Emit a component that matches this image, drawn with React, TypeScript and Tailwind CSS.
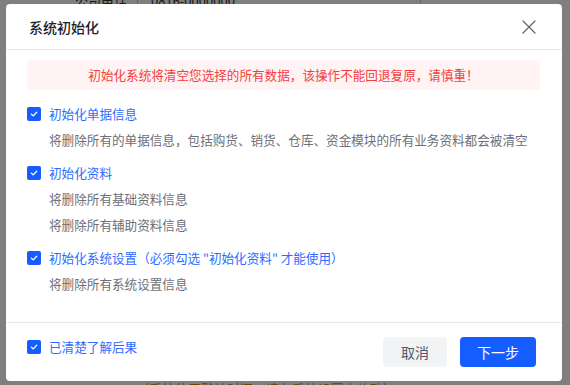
import React from "react";

const font = { fontFamily: '"Noto Sans CJK SC", "Noto Sans", sans-serif' };

function Check() {
  return (
    <span className="flex h-[14px] w-[14px] shrink-0 items-center justify-center rounded-[2px] bg-[#165dff]">
      <svg width="8" height="8" viewBox="0 0 8 8" fill="none">
        <path d="M1.3 4.1 L3.2 5.9 L6.7 2.2" stroke="#fff" strokeWidth="1.3" strokeLinecap="round" strokeLinejoin="round" />
      </svg>
    </span>
  );
}

function Option({ label, lines }: { label: string; lines: string[] }) {
  return (
    <div>
      <div className="flex h-[26px] items-center gap-[8px]">
        <Check />
        <span className="text-[12.6px] text-[#2f6bff]">{label}</span>
      </div>
      {lines.map((l) => (
        <div key={l} className="flex h-[26px] items-center pl-[22px] text-[12.6px] text-[#6b7079]">
          {l}
        </div>
      ))}
    </div>
  );
}

export default function App() {
  return (
    <div className="relative h-[385px] w-[570px] overflow-hidden bg-white" style={font}>
      {/* page behind the mask */}
      <div className="absolute left-[75px] top-[-9px] flex items-center text-[13px] text-[#333]">
        <span className="w-[62px]">公司电话</span>
        <span className="h-[20px] w-px bg-[#ccc]" />
        <span className="ml-[13px] w-[269px]">0816-0000000</span>
        <span className="h-[20px] w-px bg-[#ccc]" />
      </div>
      <div className="absolute left-[136px] top-[379px] text-[13px] text-[#d48806]">
        （系统使用默认时间，请在系统设置中修改）
      </div>

      <div className="absolute inset-0 bg-black/50 pl-[6px] pt-[4px]">
        <div className="flex h-[377px] w-[556px] flex-col rounded-[4px] bg-white">
          <div className="flex h-[46px] items-center justify-between border-b border-[#e8e9ee] pl-[23px] pr-[26px]">
            <span className="pt-[2px] text-[14px] font-medium text-[#1d2129]">系统初始化</span>
            <svg width="14" height="14" viewBox="0 0 14 14" fill="none">
              <path d="M1 1 L13 13 M13 1 L1 13" stroke="#5c6370" strokeWidth="1.2" strokeLinecap="round" />
            </svg>
          </div>

          <div className="flex flex-1 flex-col px-[21px] pt-[10px]">
            <div className="flex h-[30px] w-[513px] items-center justify-center rounded-[4px] bg-[#fff3f3] text-[12.6px] text-[#f53f3f]">
              初始化系统将清空您选择的所有数据，该操作不能回退复原，请慎重！
            </div>
            <div className="mt-[11px] flex flex-col gap-[7px]">
              <Option
                label="初始化单据信息"
                lines={["将删除所有的单据信息，包括购货、销货、仓库、资金模块的所有业务资料都会被清空"]}
              />
              <Option label="初始化资料" lines={["将删除所有基础资料信息", "将删除所有辅助资料信息"]} />
              <Option
                label={'初始化系统设置（必须勾选 "初始化资料" 才能使用）'}
                lines={["将删除所有系统设置信息"]}
              />
            </div>
          </div>

          <div className="flex h-[59px] items-start justify-between border-t border-[#e8e9ee] pl-[21px] pr-[26px]">
            <div className="mt-[11px] flex h-[26px] items-center gap-[8px]">
              <Check />
              <span className="text-[12.6px] text-[#2f6bff]">已清楚了解后果</span>
            </div>
            <div className="mt-[14px] flex gap-[13px]">
              <button className="h-[30px] w-[64px] rounded-[4px] bg-[#f2f3f5] text-[14px] text-[#4e5969]">取消</button>
              <button className="h-[30px] w-[76px] rounded-[4px] bg-[#165dff] text-[14px] text-white">下一步</button>
            </div>
          </div>
        </div>
      </div>
    </div>
  );
}
